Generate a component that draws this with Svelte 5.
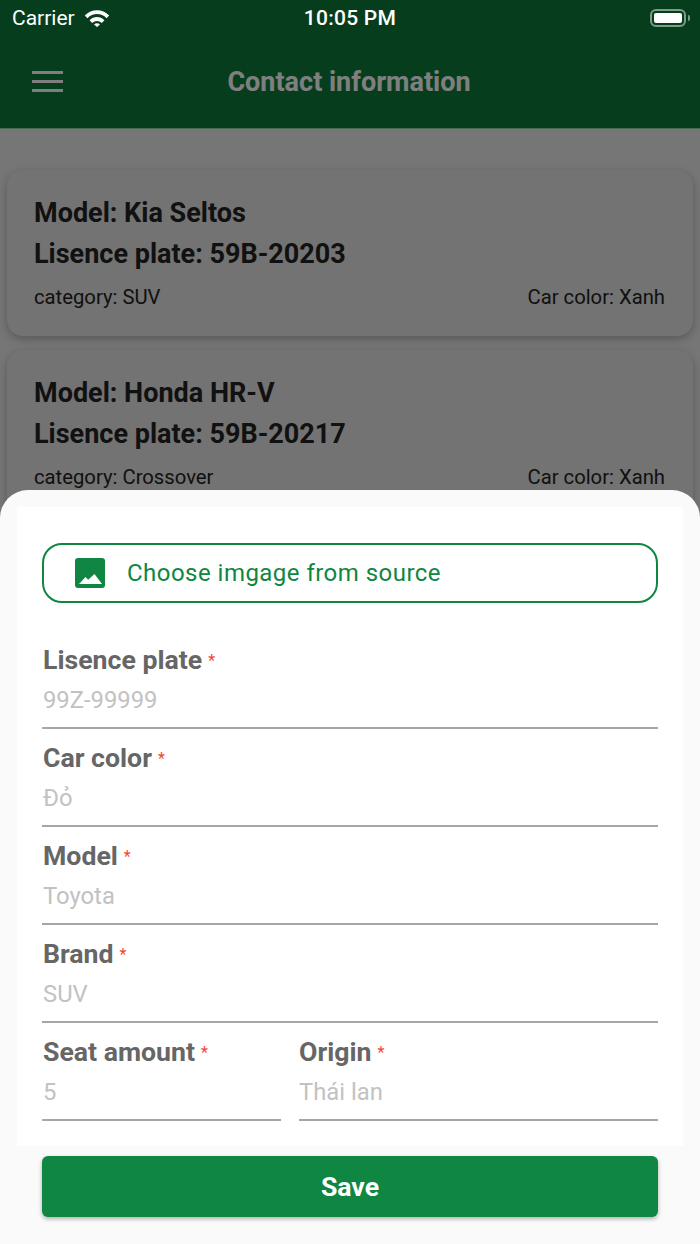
<script lang="ts">
  const cars = [
    { model: 'Kia Seltos', plate: '59B-20203', category: 'SUV', color: 'Xanh' },
    { model: 'Honda HR-V', plate: '59B-20217', category: 'Crossover', color: 'Xanh' }
  ];

  const fields = [
    { label: 'Lisence plate', hint: '99Z-99999' },
    { label: 'Car color', hint: 'Đỏ' },
    { label: 'Model', hint: 'Toyota' },
    { label: 'Brand', hint: 'SUV' }
  ];
</script>

<div class="screen">
  <header>
    <div class="status">
      <div class="carrier">
        <span>Carrier</span>
        <svg width="26" height="18" viewBox="0 0 26 18">
          <path d="M0.8 6.4C7.6 -0.6 18.4 -0.6 25.2 6.4L22.6 9.2C17.2 3.6 8.8 3.6 3.4 9.2Z" fill="#fff" />
          <path d="M5.6 11.2C9.8 6.9 16.2 6.9 20.4 11.2L17.8 13.9C15 11.2 11 11.2 8.2 13.9Z" fill="#fff" />
          <path d="M10 15.4C11.7 14 14.3 14 16 15.4L13 18Z" fill="#fff" />
        </svg>
      </div>
      <span class="time">10:05 PM</span>
      <div class="battery-wrap">
        <div class="battery"><div class="level"></div></div>
        <div class="nub"></div>
      </div>
    </div>
    <div class="bar">
      <div class="burger"><i></i><i></i><i></i></div>
      <h1>Contact information</h1>
    </div>
  </header>

  <main>
    {#each cars as car}
      <article class="card">
        <p class="strong">Model: {car.model}</p>
        <p class="strong">Lisence plate: {car.plate}</p>
        <div class="meta">
          <span>category: {car.category}</span>
          <span>Car color: {car.color}</span>
        </div>
      </article>
    {/each}
  </main>

  <div class="dim"></div>

  <section class="sheet">
    <form class="form">
      <div class="picker">
        <svg width="30" height="30" viewBox="0 0 30 30">
          <rect width="30" height="30" rx="3" fill="#0f8641" />
          <path d="M4 26L10.5 19L13.2 21.8L19.5 16L27 26Z" fill="#fff" />
        </svg>
        <span>Choose imgage from source</span>
      </div>

      {#each fields as f}
        <div class="field">
          <div class="label">{f.label}<em>*</em></div>
          <div class="hint">{f.hint}</div>
        </div>
      {/each}

      <div class="pair">
        <div class="field seat">
          <div class="label">Seat amount<em>*</em></div>
          <div class="hint">5</div>
        </div>
        <div class="field origin">
          <div class="label">Origin<em>*</em></div>
          <div class="hint">Thái lan</div>
        </div>
      </div>
    </form>
    <div class="save">Save</div>
  </section>
</div>

<style>
  :global(body) {
    margin: 0;
    font-family: Roboto, "Liberation Sans", sans-serif;
  }

  .screen {
    position: relative;
    width: 700px;
    height: 1244px;
    overflow: hidden;
    background: #ececec;
  }

  header {
    height: 129px;
    box-sizing: border-box;
    background: #0c7c3b;
    border-bottom: 1px solid #94d4aa;
    display: flex;
    flex-direction: column;
  }

  .status {
    height: 36px;
    display: grid;
    grid-template-columns: 1fr auto 1fr;
    align-items: center;
    padding: 0 10px;
    position: relative;
    z-index: 3;
    color: #fff;
    font-size: 21px;
  }

  .carrier {
    display: flex;
    align-items: center;
    gap: 9px;
    margin-left: 2px;
  }

  .carrier svg {
    margin-top: -1px;
  }

  .time {
    font-weight: 500;
    letter-spacing: 0.25px;
  }

  .battery-wrap {
    justify-self: end;
    display: flex;
    align-items: center;
    gap: 2px;
    margin-top: -1px;
  }

  .battery {
    width: 36px;
    height: 18px;
    box-sizing: border-box;
    padding: 2px;
    border: 2px solid #7c9c88;
    border-radius: 6px;
  }

  .level {
    height: 100%;
    background: #fff;
    border-radius: 2px;
  }

  .nub {
    width: 2px;
    height: 6px;
    background: #7c9c88;
    border-radius: 0 2px 2px 0;
  }

  .bar {
    flex: 1;
    display: flex;
    align-items: center;
    justify-content: center;
    position: relative;
    padding-right: 2px;
  }

  .burger {
    position: absolute;
    left: 32px;
    top: 35px;
    width: 31px;
    display: flex;
    flex-direction: column;
    gap: 6px;
  }

  .burger i {
    height: 3px;
    background: #fff;
  }

  h1 {
    margin: 0;
    color: #fff;
    font-size: 27px;
    font-weight: 700;
  }

  main {
    padding: 41px 7px 0;
    display: flex;
    flex-direction: column;
    gap: 14px;
  }

  .card {
    height: 166px;
    box-sizing: border-box;
    padding: 23px 28px 0 27px;
    background: #e6e6e6;
    border-radius: 16px;
    box-shadow: 0 3px 8px rgba(0, 0, 0, 0.25);
    color: #222;
  }

  .card p {
    margin: 0;
  }

  .strong {
    font-size: 27px;
    font-weight: 700;
    line-height: 40.5px;
  }

  .meta {
    display: flex;
    justify-content: space-between;
    margin-top: 10px;
    font-size: 20.25px;
    line-height: 26px;
  }

  .dim {
    position: absolute;
    inset: 0;
    background: rgba(0, 0, 0, 0.5);
  }

  .sheet {
    position: absolute;
    left: 0;
    right: 0;
    top: 490px;
    bottom: 0;
    padding: 17px 17px 0;
    background: #fafafa;
    border-radius: 28px 28px 0 0;
  }

  .form {
    height: 639px;
    box-sizing: border-box;
    padding: 36px 25px 0;
    background: #fff;
  }

  .picker {
    height: 60px;
    box-sizing: border-box;
    display: flex;
    align-items: center;
    gap: 22px;
    padding-left: 31px;
    margin-bottom: 34px;
    border: 2px solid #0f8641;
    border-radius: 20px;
    color: #0f8641;
    font-size: 24px;
    letter-spacing: 0.47px;
  }

  .field {
    height: 92px;
    margin-bottom: 6px;
    box-sizing: border-box;
    border-bottom: 2px solid #a6a6a6;
  }

  .label {
    padding: 1px 0 0 1px;
    font-size: 26.67px;
    font-weight: 700;
    line-height: 44px;
    color: #666;
    white-space: nowrap;
  }

  .label em {
    margin-left: 6px;
    font-size: 16px;
    font-style: normal;
    font-weight: 400;
    color: #f44336;
    vertical-align: 3px;
  }

  .hint {
    margin-top: -1px;
    padding-left: 1px;
    font-size: 23.8px;
    line-height: 36px;
    color: #c2c2c2;
    white-space: nowrap;
  }

  .pair {
    display: flex;
    justify-content: space-between;
  }

  .seat {
    width: 239px;
  }

  .origin {
    width: 359px;
  }

  .origin .label,
  .origin .hint {
    padding-left: 0;
  }

  .save {
    height: 61px;
    margin: 10px 25px 0;
    display: flex;
    align-items: center;
    justify-content: center;
    background: #0f8641;
    border-radius: 6px;
    box-shadow: 0 2px 4px rgba(0, 0, 0, 0.3);
    color: #fff;
    font-size: 26.67px;
    font-weight: 700;
  }
</style>
